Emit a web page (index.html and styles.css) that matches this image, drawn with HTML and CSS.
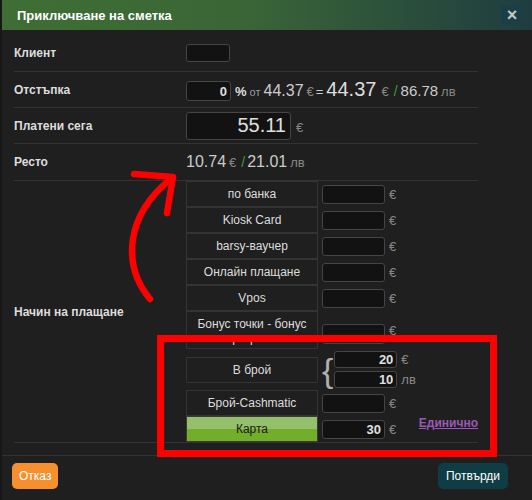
FILE: index.html
```html
<!DOCTYPE html>
<html lang="bg">
<head>
<meta charset="utf-8">
<title>Приключване на сметка</title>
<link rel="stylesheet" href="styles.css">
</head>
<body>
<div class="page">
  <div class="modal">
    <div class="header">
      <span class="title">Приключване на сметка</span>
      <span class="close">×</span>
    </div>
    <div class="content">
      <div class="row first">
        <div class="label">Клиент</div>
        <div class="val"><input class="inp inp-client" type="text" value=""></div>
      </div>
      <div class="row">
        <div class="label">Отстъпка</div>
        <div class="val">
          <input class="inp inp-disc" type="text" value="0">
          <span class="pct">%</span>
          <span class="small">от</span>
          <span class="num16">44.37</span>
          <span class="cur">€</span>
          <span class="eq">=</span>
          <span class="num20">44.37</span>
          <span class="cur cur-wide">€</span>
          <span class="slash">/</span>
          <span class="num15">86.78</span>
          <span class="cur">лв</span>
        </div>
      </div>
      <div class="row">
        <div class="label">Платени сега</div>
        <div class="val">
          <input class="inp inp-paid" type="text" value="55.11">
          <span class="cur cur-wide">€</span>
        </div>
      </div>
      <div class="row r4">
        <div class="label">Ресто</div>
        <div class="val">
          <span class="num16b">10.74</span>
          <span class="cur">€</span>
          <span class="slash">/</span>
          <span class="num16b">21.01</span>
          <span class="cur">лв</span>
        </div>
      </div>
      <div class="row pay">
        <div class="label">Начин на плащане</div>
        <div class="plist">
          <div class="prow"><div class="pcell">по банка</div><input class="inp pinp" type="text" value=""><span class="cur pc">€</span></div>
          <div class="prow"><div class="pcell">Kiosk Card</div><input class="inp pinp" type="text" value=""><span class="cur pc">€</span></div>
          <div class="prow"><div class="pcell">barsy-ваучер</div><input class="inp pinp" type="text" value=""><span class="cur pc">€</span></div>
          <div class="prow"><div class="pcell">Онлайн плащане</div><input class="inp pinp" type="text" value=""><span class="cur pc">€</span></div>
          <div class="prow"><div class="pcell">Vpos</div><input class="inp pinp" type="text" value=""><span class="cur pc">€</span></div>
          <div class="prow bonus"><div class="pcell bonus-cell">Бонус точки - бонус програми</div><input class="inp pinp pinp-tall" type="text" value=""><span class="cur pc">€</span></div>
          <div class="prow cash">
            <div class="pcell">В брой</div>
            <span class="brace">{</span>
            <div class="stack">
              <div class="srow"><input class="inp sinp" type="text" value="20"><span class="cur pc">€</span></div>
              <div class="srow"><input class="inp sinp" type="text" value="10"><span class="cur pc">лв</span></div>
            </div>
          </div>
          <div class="prow"><div class="pcell">Брой-Cashmatic</div><input class="inp pinp" type="text" value=""><span class="cur pc">€</span></div>
          <div class="prow"><div class="pcell green">Карта</div><input class="inp pinp" type="text" value="30"><span class="cur pc">€</span><a class="link" href="#">Единично</a></div>
        </div>
      </div>
    </div>
    <div class="footer">
      <button class="btn btn-cancel">Отказ</button>
      <button class="btn btn-ok">Потвърди</button>
    </div>
  </div>
  <div class="annot-box"></div>
  <svg class="arrow" width="532" height="500" viewBox="0 0 532 500">
    <path d="M150,299 C122,265 125,215 172,178" fill="none" stroke="#ff0000" stroke-width="6.5" stroke-linecap="round"/>
    <polyline points="134,174 173,177 167,213" fill="none" stroke="#ff0000" stroke-width="6.5" stroke-linecap="round" stroke-linejoin="round"/>
  </svg>
</div>
</body>
</html>
```
FILE: styles.css
```css
* { box-sizing: border-box; }
body {
  margin: 0;
  background: #171717;
  font-family: "Liberation Sans", Arial, sans-serif;
}
.page {
  position: relative;
  width: 532px;
  height: 500px;
  overflow: hidden;
}
.modal {
  margin-left: 2px;
  height: 500px;
  background: #1f1f1f;
  display: flex;
  flex-direction: column;
}
.header {
  height: 30px;
  flex: none;
  display: flex;
  align-items: center;
  justify-content: space-between;
  padding: 0 9px 0 15px;
  background: linear-gradient(90deg, #3f6e34 0%, #3a6636 45%, #1f3d40 100%);
}
.title {
  color: #fff;
  font-size: 13px;
  font-weight: bold;
}
.close {
  width: 22px;
  height: 20px;
  border-radius: 4px;
  background: #1a3f47;
  color: #c8c8c8;
  font-size: 18px;
  font-weight: bold;
  line-height: 20px;
  text-align: center;
}
.content {
  flex: none;
  padding: 5px 54px 12px 12px;
}
.row {
  display: flex;
  align-items: center;
  height: 36px;
  border-top: 1px solid #333;
}
.row.first { border-top: none; }
.row.r4 { height: 37px; }
.row.pay {
  height: 263px;
  border-bottom: 1px solid #333;
}
.label {
  width: 172px;
  flex: none;
  color: #ddd;
  font-size: 12px;
  font-weight: bold;
}
.val {
  display: flex;
  align-items: baseline;
  color: #ccc;
}
.inp {
  background: #121212;
  border: 1px solid #454545;
  border-radius: 3px;
  color: #e0e0e0;
  font-family: "Liberation Sans", Arial, sans-serif;
  text-align: right;
  padding: 0 3px;
  margin: 0;
  outline: none;
}
.inp-client { width: 44px; height: 18px; }
.inp-disc { width: 45px; height: 20px; font-size: 13px; font-weight: bold; }
.inp-paid { width: 105px; height: 28px; font-size: 20px; padding-right: 4px; }
.pct { font-size: 13px; font-weight: bold; color: #ddd; margin-left: 4px; }
.small { font-size: 11px; color: #999; margin-left: 3px; }
.num16 { font-size: 16px; color: #ccc; margin-left: 3px; }
.num16b { font-size: 16px; color: #ccc; }
.num20 { font-size: 20px; color: #ddd; margin-left: 3px; }
.num15 { font-size: 15px; color: #ccc; margin-left: 1px; }
.eq { font-size: 13px; color: #ccc; margin-left: 2px; }
.cur { font-size: 13px; color: #888; margin-left: 3px; }
.cur-wide { margin-left: 5px; }
.slash { font-size: 14px; color: #3e9a3e; margin-left: 5px; margin-right: 2px; }
.plist {
  display: flex;
  flex-direction: column;
  width: 292px;
  align-self: flex-start;
}
.prow {
  display: flex;
  align-items: center;
  height: 26px;
}
.pcell {
  width: 132px;
  height: 26px;
  flex: none;
  border: 1px solid #333;
  display: flex;
  align-items: center;
  justify-content: center;
  text-align: center;
  font-size: 12px;
  color: #ddd;
  overflow: hidden;
}
.prow.bonus { height: 38px; }
.bonus-cell {
  height: 38px;
  align-items: flex-start;
  padding: 5px 6px 0;
  line-height: 14px;
}
.pinp {
  width: 63px;
  height: 19px;
  margin-left: 4px;
  font-size: 13px;
  font-weight: bold;
}
.pinp-tall { height: 20px; margin-top: 8px; }
.pc { margin-left: 4px; }
.prow.cash { height: 41px; }
.brace {
  font-size: 34px;
  color: #b0b0b0;
  line-height: 34px;
  margin-left: 4px;
  font-weight: 300;
}
.stack {
  display: flex;
  flex-direction: column;
  gap: 3px;
  margin-left: 1px;
}
.srow { display: flex; align-items: center; }
.sinp {
  width: 63px;
  height: 17px;
  font-size: 13px;
  font-weight: bold;
}
.green {
  background: linear-gradient(#94c06b 0%, #94c06b 50%, #73ae2b 50%, #73ae2b 100%);
  color: #1a1a1a;
  border-color: #3a3a3a;
}
.link {
  margin-left: auto;
  align-self: flex-start;
  color: #9b59b6;
  font-size: 12px;
  font-weight: bold;
  line-height: 14px;
  text-decoration: underline;
}
.footer {
  flex: 1;
  border-top: 1px solid #333;
  display: flex;
  justify-content: space-between;
  align-items: flex-start;
  padding: 7px 24px 0 10px;
}
.btn {
  height: 26px;
  border: none;
  border-radius: 5px;
  color: #fff;
  font-family: "Liberation Sans", Arial, sans-serif;
  font-size: 12px;
  padding: 0 7px;
}
.btn-cancel { background: #f6902f; }
.btn-ok { background: #0e3d46; padding: 0 8px; }
.annot-box {
  position: absolute;
  left: 157px;
  top: 335px;
  width: 340px;
  height: 122px;
  border: 7px solid #ff0000;
}
.arrow {
  position: absolute;
  left: 0;
  top: 0;
  pointer-events: none;
}
```
